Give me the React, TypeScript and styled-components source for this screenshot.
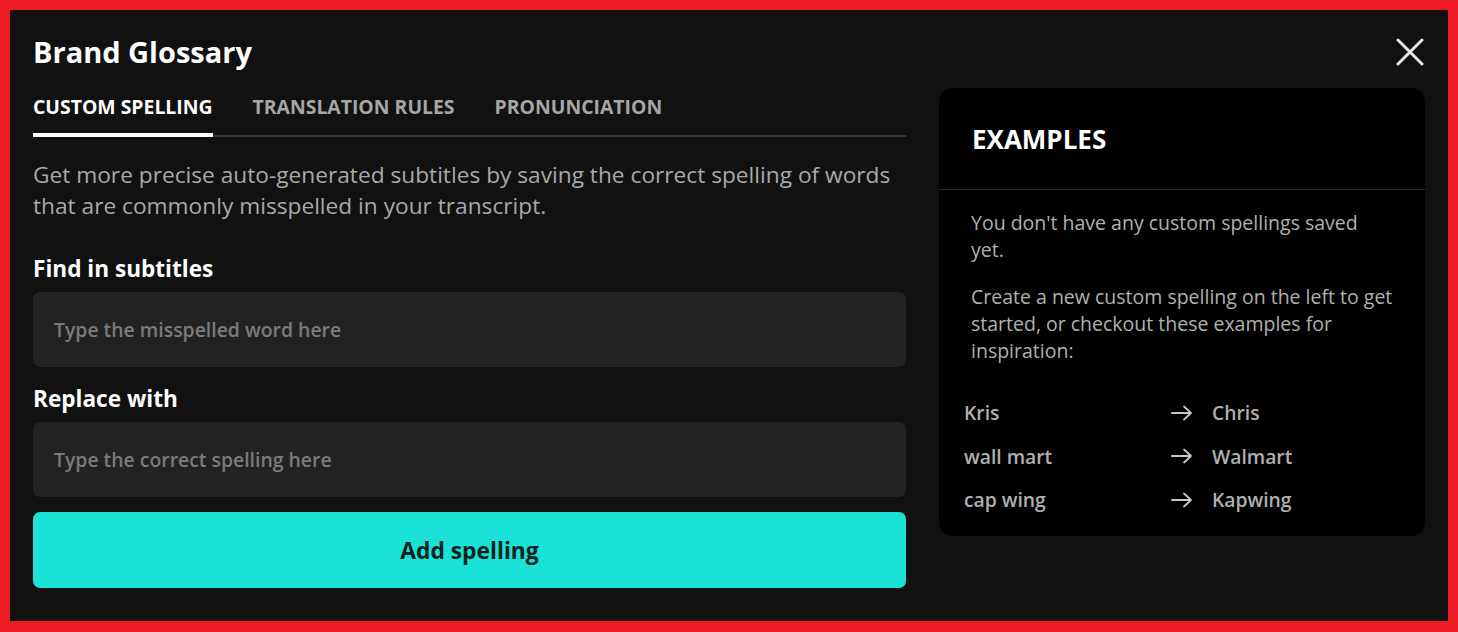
import React, { useState } from "react";
import styled, { createGlobalStyle } from "styled-components";

const GlobalStyle = createGlobalStyle`
  html, body {
    margin: 0;
    padding: 0;
    background: #ed1c24;
  }
  body {
    font-family: "Open Sans", "Noto Sans", sans-serif;
  }
  * {
    box-sizing: border-box;
  }
`;

const tabs = ["Custom spelling", "Translation rules", "Pronunciation"];

const examples = [
  { from: "Kris", to: "Chris" },
  { from: "wall mart", to: "Walmart" },
  { from: "cap wing", to: "Kapwing" },
];

export default function App() {
  const [activeTab, setActiveTab] = useState(0);

  return (
    <>
      <GlobalStyle />
      <Frame>
        <Modal>
          <Header>
            <Title>Brand Glossary</Title>
            <CloseButton aria-label="Close">
              <svg width="28" height="28" viewBox="0 0 28 28" fill="none">
                <path d="M2 2L26 26M26 2L2 26" stroke="#e6e6e6" strokeWidth="3" strokeLinecap="round" />
              </svg>
            </CloseButton>
          </Header>
          <Body>
            <FormColumn>
              <TabBar>
                {tabs.map((tab, i) => (
                  <Tab key={tab} active={i === activeTab} onClick={() => setActiveTab(i)}>
                    {tab}
                  </Tab>
                ))}
              </TabBar>
              <Description>
                Get more precise auto-generated subtitles by saving the correct spelling of words
                that are commonly misspelled in your transcript.
              </Description>
              <Field>
                <Label>Find in subtitles</Label>
                <Input placeholder="Type the misspelled word here" />
              </Field>
              <Field>
                <Label>Replace with</Label>
                <Input placeholder="Type the correct spelling here" />
              </Field>
              <AddButton>Add spelling</AddButton>
            </FormColumn>

            <ExamplesPanel>
              <PanelHeader>Examples</PanelHeader>
              <PanelBody>
                <PanelText>You don't have any custom spellings saved yet.</PanelText>
                <PanelText>
                  Create a new custom spelling on the left to get started, or checkout these
                  examples for inspiration:
                </PanelText>
                <ExampleList>
                  {examples.map((ex) => (
                    <ExampleRow key={ex.from}>
                      <ExampleWord>{ex.from}</ExampleWord>
                      <Arrow>
                        <svg width="22" height="16" viewBox="0 0 22 16" fill="none">
                          <path
                            d="M1 8H20M13 1.5L20 8L13 14.5"
                            stroke="#c8c8c8"
                            strokeWidth="1.8"
                            strokeLinecap="round"
                            strokeLinejoin="round"
                          />
                        </svg>
                      </Arrow>
                      <ExampleWord>{ex.to}</ExampleWord>
                    </ExampleRow>
                  ))}
                </ExampleList>
              </PanelBody>
            </ExamplesPanel>
          </Body>
        </Modal>
      </Frame>
    </>
  );
}

const Frame = styled.div`
  padding: 10px;
  height: 632px;
`;

const Modal = styled.div`
  background: #111111;
  height: 611px;
  padding: 23px 23px 0 23px;
  color: #fff;
`;

const Header = styled.div`
  display: flex;
  justify-content: space-between;
  align-items: center;
  height: 38px;
`;

const Title = styled.h1`
  margin: 0 0 2px;
  font-size: 29px;
  font-weight: 700;
  color: #fff;
`;

const CloseButton = styled.button`
  background: none;
  border: none;
  padding: 0;
  margin-right: 1px;
  width: 28px;
  height: 28px;
  display: flex;
  cursor: pointer;
`;

const Body = styled.div`
  display: grid;
  grid-template-columns: 873px 486px;
  column-gap: 33px;
  align-items: start;
  margin-top: 17px;
`;

const FormColumn = styled.div`
  display: flex;
  flex-direction: column;
`;

const TabBar = styled.div`
  display: flex;
  gap: 40px;
  border-bottom: 2px solid #3a3a3a;
  height: 49px;
`;

const Tab = styled.button<{ active: boolean }>`
  background: none;
  border: none;
  padding: 5px 0 0;
  margin-bottom: -2px;
  font-family: inherit;
  font-size: 19.4px;
  font-weight: 700;
  text-transform: uppercase;
  white-space: nowrap;
  color: ${(p) => (p.active ? "#ffffff" : "#a6a6a6")};
  border-bottom: 4px solid ${(p) => (p.active ? "#ffffff" : "transparent")};
  align-self: stretch;
  display: flex;
  align-items: flex-start;
  cursor: pointer;
`;

const Description = styled.p`
  margin: 22px 0 0;
  font-size: 22.7px;
  line-height: 31px;
  color: #a9a9a9;
`;

const Field = styled.div`
  display: flex;
  flex-direction: column;
  margin-top: 33px;

  & + & {
    margin-top: 17px;
  }
`;

const Label = styled.label`
  font-size: 22.6px;
  font-weight: 700;
  color: #fff;
  line-height: 30px;
  margin-bottom: 8px;
`;

const Input = styled.input`
  height: 75px;
  background: #222222;
  border: none;
  border-radius: 7px;
  padding: 0 21px;
  font-family: inherit;
  font-size: 19.4px;
  font-weight: 600;
  color: #fff;
  outline: none;

  &::placeholder {
    color: #7b7b7b;
  }
`;

const AddButton = styled.button`
  margin-top: 15px;
  height: 76px;
  border: none;
  border-radius: 7px;
  background: #1ae2d6;
  color: #112220;
  font-family: inherit;
  font-size: 22.8px;
  font-weight: 700;
  cursor: pointer;
`;

const ExamplesPanel = styled.div`
  background: #000;
  border-radius: 14px;
  padding-bottom: 24px;
`;

const PanelHeader = styled.div`
  padding: 33px 33px 0;
  height: 102px;
  font-size: 26px;
  font-weight: 700;
  text-transform: uppercase;
  color: #fff;
  border-bottom: 1px solid #2c2c2c;
`;

const PanelBody = styled.div`
  padding: 19px 32px 0;
`;

const PanelText = styled.p`
  margin: 0 0 20px;
  font-size: 19.5px;
  line-height: 27px;
  color: #b0b0b0;
`;

const ExampleList = styled.div`
  display: flex;
  flex-direction: column;
  gap: 18.5px;
  margin: 36px 0 0 -7px;
`;

const ExampleRow = styled.div`
  display: grid;
  grid-template-columns: 207px 41px 1fr;
  align-items: center;
`;

const ExampleWord = styled.span`
  font-size: 19.3px;
  font-weight: 600;
  line-height: 25px;
  color: #b0b0b0;
`;

const Arrow = styled.span`
  display: flex;
  align-items: center;
`;
